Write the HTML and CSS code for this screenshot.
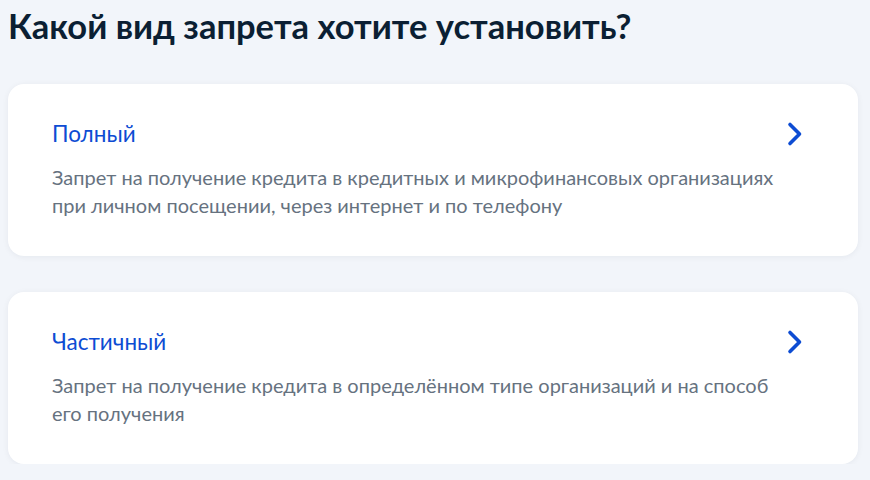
FILE: index.html
```html
<!DOCTYPE html>
<html lang="ru">
<head>
<meta charset="utf-8">
<link rel="stylesheet" href="styles.css">
</head>
<body>
<main class="page">
  <h1 class="title">Какой вид запрета хотите установить?</h1>
  <div class="list">
    <a class="card" href="#">
      <div class="card-head">
        <span class="card-title">Полный</span>
        <svg class="chev" width="18" height="26" viewBox="0 0 18 26"><path d="M4 3.5 L13.5 13 L4 22.5" fill="none" stroke="#0d4cd3" stroke-width="3.6" stroke-linecap="round" stroke-linejoin="round"/></svg>
      </div>
      <p class="card-text">Запрет на получение кредита в кредитных и микрофинансовых организациях при личном посещении, через интернет и по телефону</p>
    </a>
    <a class="card" href="#">
      <div class="card-head">
        <span class="card-title">Частичный</span>
        <svg class="chev" width="18" height="26" viewBox="0 0 18 26"><path d="M4 3.5 L13.5 13 L4 22.5" fill="none" stroke="#0d4cd3" stroke-width="3.6" stroke-linecap="round" stroke-linejoin="round"/></svg>
      </div>
      <p class="card-text">Запрет на получение кредита в определённом типе организаций и на способ его получения</p>
    </a>
  </div>
</main>
</body>
</html>
```
FILE: styles.css
```css
html, body { margin: 0; padding: 0; }
body {
  background: #f2f5fa;
  font-family: Lato, "Noto Sans", sans-serif;
  color: #0b1f33;
}
.page { padding: 4px 12px 0 8px; }
.title {
  margin: 0;
  font-size: 34.5px;
  line-height: 44px;
  font-weight: 700;
  color: #0b1f33;
}
.list {
  margin-top: 36px;
  display: flex;
  flex-direction: column;
  gap: 36px;
}
.card {
  display: block;
  background: #ffffff;
  border-radius: 16px;
  box-shadow: 0 1px 6px rgba(11, 31, 51, 0.06);
  padding: 35px 54px 38px 44px;
  text-decoration: none;
  height: 172px;
  box-sizing: border-box;
}
.card-head {
  display: flex;
  align-items: center;
  justify-content: space-between;
}
.card-title {
  font-size: 22.5px;
  line-height: 30px;
  color: #0d4cd3;
}
.chev { display: block; }
.card-text {
  margin: 14px 0 0;
  font-size: 20px;
  line-height: 28px;
  color: #66727f;
  max-width: 745px;
}
```
